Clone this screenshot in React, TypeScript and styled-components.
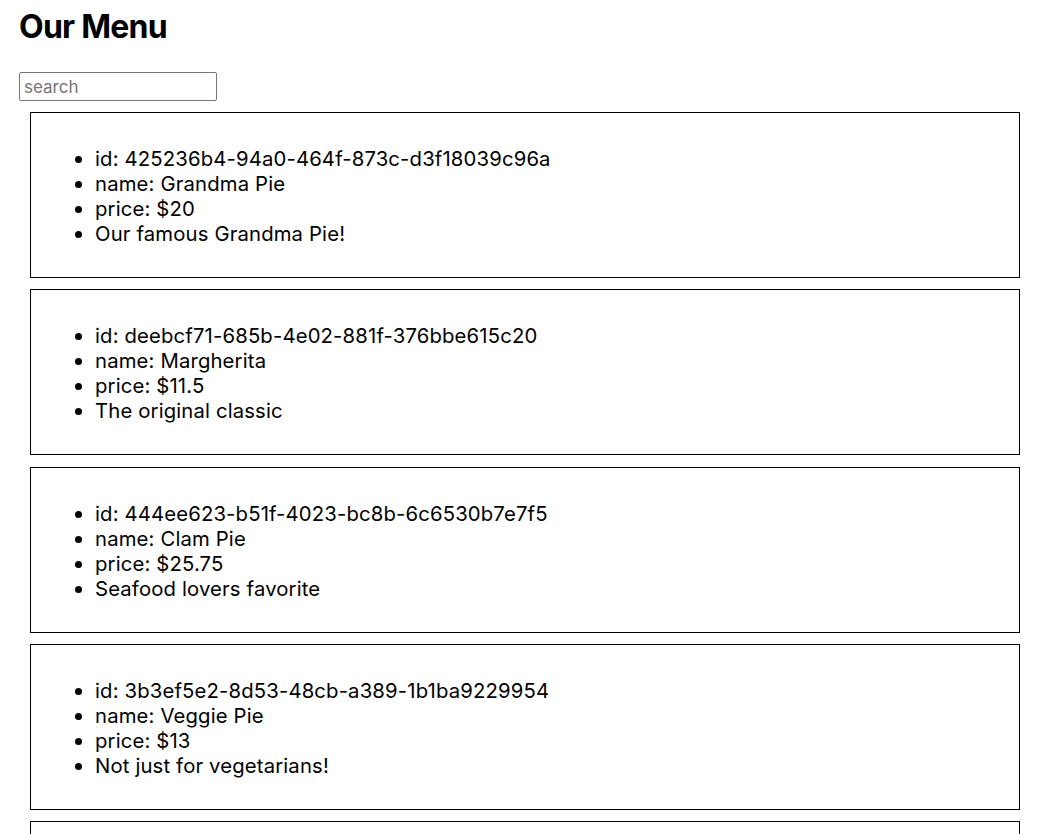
import React, { useState } from "react";
import styled, { createGlobalStyle } from "styled-components";

const Global = createGlobalStyle`
  html, body { margin: 0; padding: 0; background: #fff; }
  body { font-family: Inter, "Liberation Sans", sans-serif; color: #000; }
`;

const Page = styled.div`
  padding: 0 27px 0 19px;
`;

const Title = styled.h1`
  font-size: 32px;
  font-weight: 700;
  line-height: 37px;
  margin: 8px 0 27px;
  letter-spacing: -0.75px;
`;

const Search = styled.input`
  display: block;
  box-sizing: border-box;
  width: 198px;
  height: 29px;
  margin: 0 0 11px;
  padding: 1px 4px;
  font-family: Inter, "Liberation Sans", sans-serif;
  font-size: 17px;
  border: 1px solid #767676;
  border-radius: 2px;
  color: #000;
  &::placeholder { color: #757575; }
`;

const CardList = styled.div`
  margin-left: 11px;
`;

const Card = styled.div`
  box-sizing: border-box;
  height: 166px;
  border: 1px solid #000;
  padding: 13px 24px 11px;
  margin-bottom: 11.25px;
  overflow: hidden;
`;

const Fields = styled.ul`
  margin: 20px 0;
  padding-left: 40px;
  font-size: 20.3px;
  line-height: 25px;
  letter-spacing: 0.15px;
`;

type Item = { id: string; name: string; price: number; description: string };

const items: Item[] = [
  { id: "425236b4-94a0-464f-873c-d3f18039c96a", name: "Grandma Pie", price: 20, description: "Our famous Grandma Pie!" },
  { id: "deebcf71-685b-4e02-881f-376bbe615c20", name: "Margherita", price: 11.5, description: "The original classic" },
  { id: "444ee623-b51f-4023-bc8b-6c6530b7e7f5", name: "Clam Pie", price: 25.75, description: "Seafood lovers favorite" },
  { id: "3b3ef5e2-8d53-48cb-a389-1b1ba9229954", name: "Veggie Pie", price: 13, description: "Not just for vegetarians!" },
  { id: "7c1e9a30-2f4b-4d8e-9b61-0a5f3c2d8e17", name: "Pepperoni", price: 14, description: "A crowd pleaser" },
];

export default function App() {
  const [q, setQ] = useState("");
  const shown = items.filter((i) => i.name.toLowerCase().includes(q.toLowerCase()));
  return (
    <Page>
      <Global />
      <Title>Our Menu</Title>
      <Search placeholder="search" value={q} onChange={(e) => setQ(e.target.value)} />
      <CardList>
        {shown.map((it) => (
          <Card key={it.id}>
            <Fields>
              <li>id: {it.id}</li>
              <li>name: {it.name}</li>
              <li>price: ${it.price}</li>
              <li>{it.description}</li>
            </Fields>
          </Card>
        ))}
      </CardList>
    </Page>
  );
}
